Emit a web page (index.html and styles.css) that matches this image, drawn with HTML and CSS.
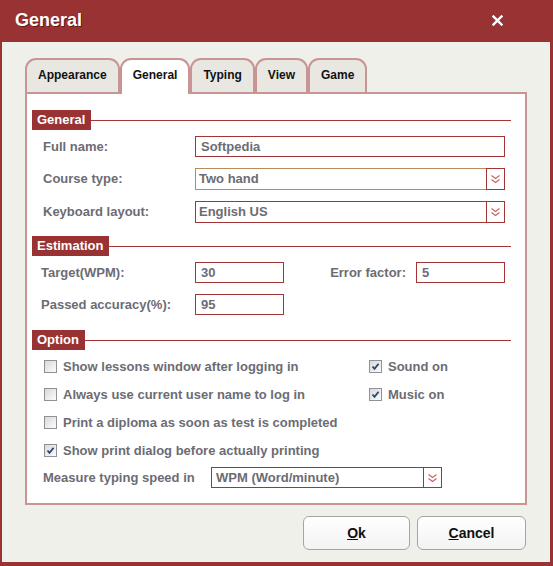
FILE: index.html
```html
<!DOCTYPE html>
<html lang="en">
<head>
    <meta charset="UTF-8">
    <title>General</title>
    <link rel="stylesheet" href="styles.css">
</head>
<body>
<div class="window">
    <div class="titlebar">
        <span class="title">General</span>
        <svg class="close" width="11" height="11" viewBox="0 0 11 11">
            <path d="M1.5 1.5 L9.5 9.5 M9.5 1.5 L1.5 9.5" stroke="#fff" stroke-width="2.4" stroke-linecap="square"/>
        </svg>
    </div>

    <div class="content">
        <div class="tabs">
            <div class="tab">Appearance</div>
            <div class="tab active">General</div>
            <div class="tab">Typing</div>
            <div class="tab">View</div>
            <div class="tab">Game</div>
        </div>

        <div class="panel">
            <!-- General -->
            <div class="section-head"><span>General</span></div>
            <div class="row first">
                <label>Full name:</label>
                <div class="field wide">Softpedia</div>
            </div>
            <div class="row">
                <label>Course type:</label>
                <div class="select wide focus">
                    <div class="value">Two hand</div>
                    <div class="arrow"><svg width="11" height="10" viewBox="0 0 11 10"><path d="M1.5 1.5 L5.5 4.5 L9.5 1.5 M1.5 5.5 L5.5 8.5 L9.5 5.5" fill="none" stroke="#c86464" stroke-width="1.2"/></svg></div>
                </div>
            </div>
            <div class="row tall">
                <label>Keyboard layout:</label>
                <div class="select wide">
                    <div class="value">English US</div>
                    <div class="arrow"><svg width="11" height="10" viewBox="0 0 11 10"><path d="M1.5 1.5 L5.5 4.5 L9.5 1.5 M1.5 5.5 L5.5 8.5 L9.5 5.5" fill="none" stroke="#c86464" stroke-width="1.2"/></svg></div>
                </div>
            </div>

            <!-- Estimation -->
            <div class="section-head gap-before"><span>Estimation</span></div>
            <div class="row first">
                <label class="short">Target(WPM):</label>
                <div class="field small">30</div>
                <div class="side">
                    <span class="side-label">Error factor:</span>
                    <div class="field small">5</div>
                </div>
            </div>
            <div class="row">
                <label class="short">Passed accuracy(%):</label>
                <div class="field small">95</div>
            </div>

            <!-- Option -->
            <div class="section-head gap-option"><span>Option</span></div>
            <div class="checks">
                <div class="check"><span class="box"></span>Show lessons window after logging in</div>
                <div class="check"><span class="box on"><svg width="11" height="11" viewBox="0 0 11 11"><path d="M2.5 5.5 L4.5 7.8 L8.6 2.8" fill="none" stroke="#2b4670" stroke-width="1.8"/></svg></span>Sound on</div>
                <div class="check"><span class="box"></span>Always use current user name to log in</div>
                <div class="check"><span class="box on"><svg width="11" height="11" viewBox="0 0 11 11"><path d="M2.5 5.5 L4.5 7.8 L8.6 2.8" fill="none" stroke="#2b4670" stroke-width="1.8"/></svg></span>Music on</div>
                <div class="check"><span class="box"></span>Print a diploma as soon as test is completed</div>
                <div></div>
                <div class="check"><span class="box on"><svg width="11" height="11" viewBox="0 0 11 11"><path d="M2.5 5.5 L4.5 7.8 L8.6 2.8" fill="none" stroke="#2b4670" stroke-width="1.8"/></svg></span>Show print dialog before actually printing</div>
                <div></div>
            </div>
            <div class="row measure">
                <label>Measure typing speed in</label>
                <div class="select speed">
                    <div class="value">WPM (Word/minute)</div>
                    <div class="arrow"><svg width="11" height="10" viewBox="0 0 11 10"><path d="M1.5 1.5 L5.5 4.5 L9.5 1.5 M1.5 5.5 L5.5 8.5 L9.5 5.5" fill="none" stroke="#c86464" stroke-width="1.2"/></svg></div>
                </div>
            </div>
        </div>

        <div class="footer">
            <button class="btn ok"><u>O</u>k</button>
            <button class="btn cancel"><u>C</u>ancel</button>
        </div>
    </div>
</div>
</body>
</html>
```

FILE: styles.css
```css
* {
    box-sizing: border-box;
    margin: 0;
    padding: 0;
}

body {
    font-family: "Liberation Sans", Arial, sans-serif;
    background: #f0f0eb;
}

.window {
    width: 553px;
    height: 566px;
    display: flex;
    flex-direction: column;
    border-left: 2px solid #993333;
    border-right: 3px solid #993333;
    border-bottom: 4px solid #993333;
    background: #f0f0eb;
}

.titlebar {
    height: 42px;
    background: #993333;
    display: flex;
    align-items: center;
    justify-content: space-between;
    padding: 0 47px 1px 13px;
}

.title {
    color: #fff;
    font-size: 18px;
    font-weight: bold;
    text-shadow: 1px 1px 0 rgba(60, 0, 0, 0.55);
}

.close {
    display: block;
}

.content {
    flex: 1;
    padding: 16px 23px 0 23px;
}

/* Tabs */
.tabs {
    display: flex;
    align-items: flex-start;
    height: 34px;
}

.tab {
    height: 34px;
    padding: 0 11px;
    line-height: 31px;
    border: 2px solid #c89494;
    border-bottom: none;
    border-radius: 11px 11px 0 0;
    background: #e8e7e2;
    font-size: 12px;
    font-weight: bold;
    color: #111;
}

.tab.active {
    height: 36px;
    background: #fff;
    position: relative;
    z-index: 1;
}

/* Panel */
.panel {
    height: 413px;
    background: #fff;
    border: 2px solid #c89494;
    padding: 16px 14px 0 5px;
}

.section-head {
    display: flex;
    align-items: center;
    height: 20px;
}

.section-head span {
    background: #993333;
    color: #fff;
    font-size: 13px;
    font-weight: bold;
    line-height: 20px;
    padding: 0 6px 0 5px;
}

.section-head::after {
    content: "";
    flex: 1;
    height: 1px;
    background: #a23535;
}

.section-head.gap-before {
    margin-top: 14px;
}

.section-head.gap-option {
    margin-top: 15px;
}

.row {
    display: flex;
    align-items: center;
    height: 21px;
    margin-top: 11px;
    padding-right: 6px;
}

.row.first {
    margin-top: 6px;
}

.row.tall {
    margin-top: 12px;
}

.row label,
.side-label,
.check {
    font-size: 13px;
    font-weight: bold;
    color: #6c6c74;
}

.row label {
    width: 163px;
    padding-left: 11px;
}

.row label.short {
    padding-left: 9px;
}

.field {
    height: 21px;
    border: 1px solid #a23535;
    background: #fff;
    font-size: 13px;
    font-weight: bold;
    color: #6c6c74;
    line-height: 19px;
    padding-left: 5px;
}

.wide {
    flex: 1;
}

.field.small {
    width: 89px;
}

.side {
    margin-left: auto;
    display: flex;
    align-items: center;
    gap: 10px;
}

.select {
    display: flex;
    height: 22px;
}

.select .value {
    flex: 1;
    border: 1px solid #a23535;
    border-right: none;
    font-size: 13px;
    font-weight: bold;
    color: #6c6c74;
    line-height: 20px;
    padding-left: 3px;
}

.select.focus .value {
    border-color: #bb8a5a;
}

.select .arrow {
    width: 19px;
    border: 1px solid #a23535;
    display: flex;
    align-items: center;
    justify-content: center;
}

/* Options */
.checks {
    display: grid;
    grid-template-columns: 325px auto;
    grid-auto-rows: 28px;
    margin-top: 2px;
    padding-left: 12px;
}

.check {
    display: flex;
    align-items: center;
    gap: 6px;
}

.box {
    width: 13px;
    height: 13px;
    border: 1px solid #8e9297;
    background: linear-gradient(135deg, #d9d9d9, #fbfbfb);
    display: flex;
    align-items: center;
    justify-content: center;
}

.row.measure {
    margin-top: 3px;
}

.row.measure label {
    width: 179px;
}

.select.speed {
    height: 21px;
    width: 231px;
}

.select.speed .value {
    padding-left: 4px;
    line-height: 19px;
}

/* Buttons */
.footer {
    display: flex;
    justify-content: flex-end;
    gap: 7px;
    margin-top: 11px;
    padding-right: 1px;
}

.btn {
    height: 34px;
    border: 1px solid #a5a5a5;
    border-radius: 6px;
    background: linear-gradient(#ffffff, #f3f3f3);
    font-family: "Liberation Sans", Arial, sans-serif;
    font-size: 14px;
    font-weight: bold;
    color: #111;
}

.btn.ok {
    width: 107px;
}

.btn.cancel {
    width: 109px;
}
```
